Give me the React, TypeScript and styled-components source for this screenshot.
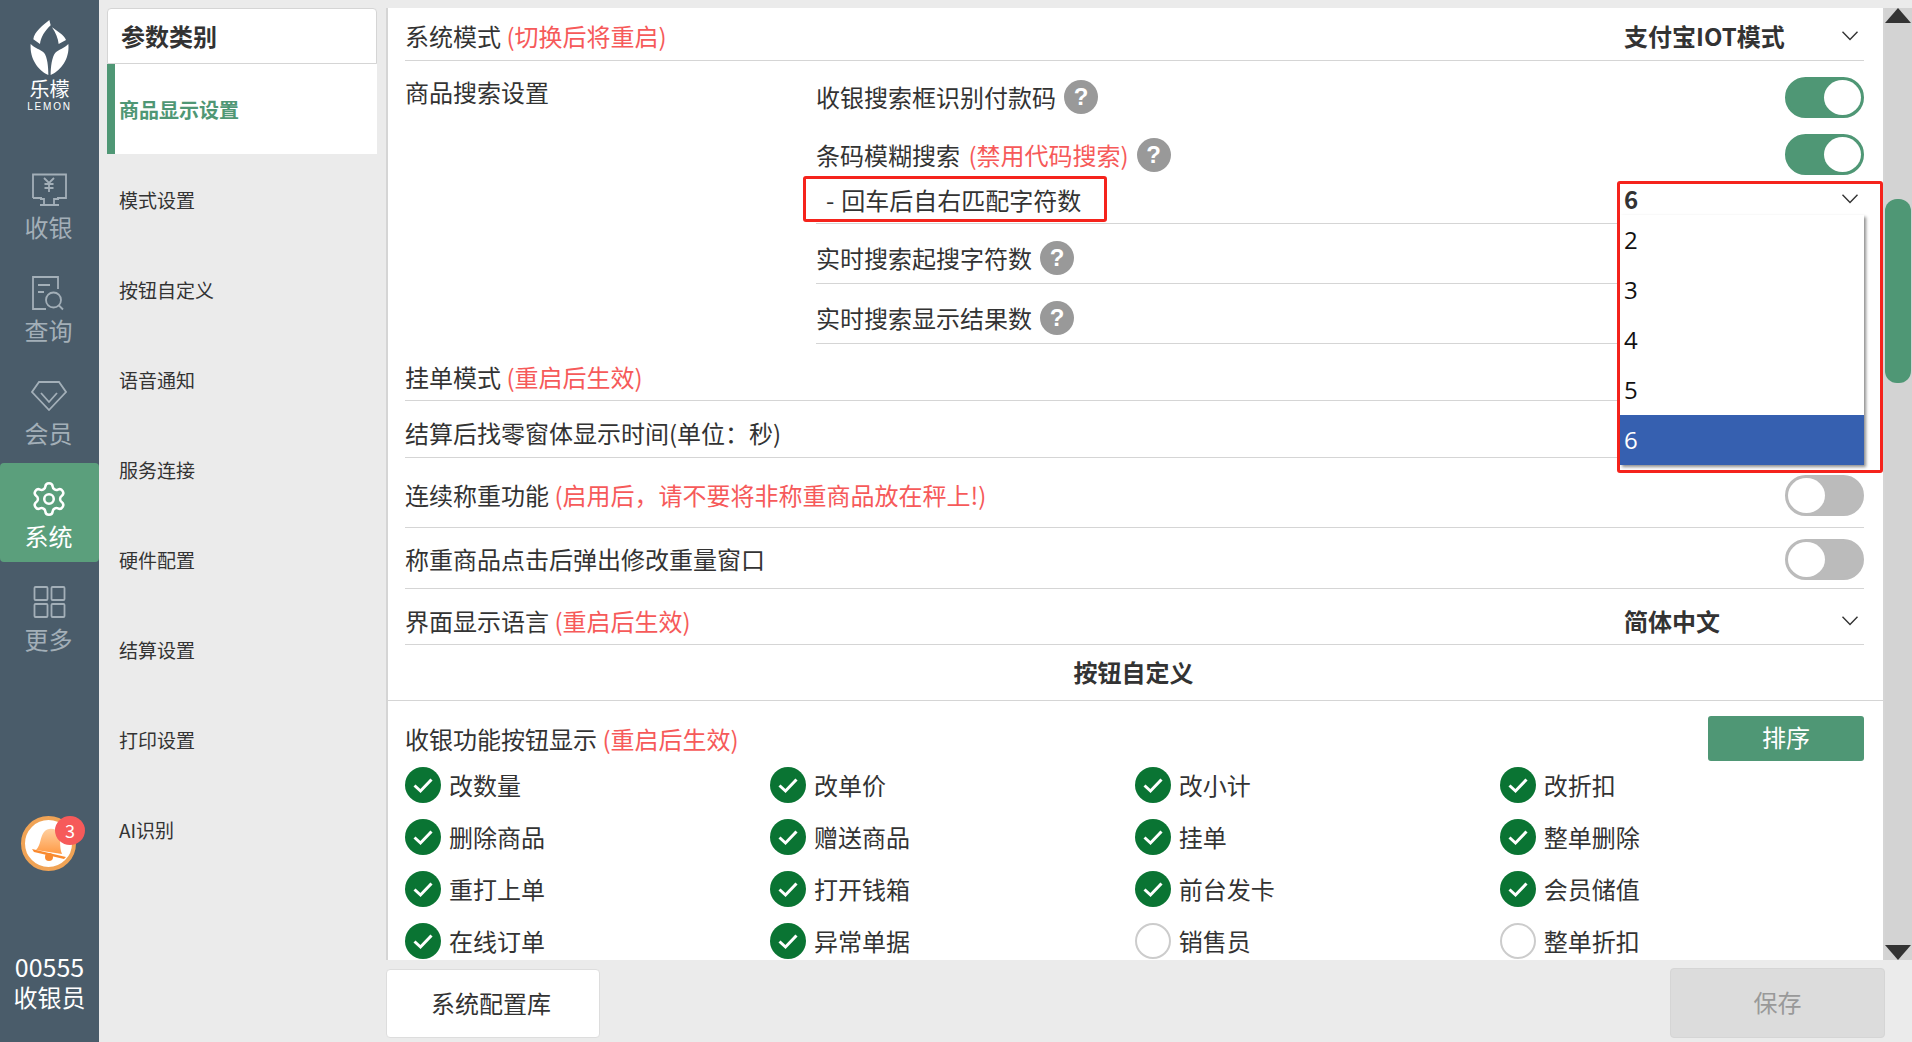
import React from 'react';
import styled, { createGlobalStyle } from 'styled-components';
import { Settings } from 'lucide-react';

const FONT = '"Noto Sans CJK SC", "Noto Sans", sans-serif';

const GlobalStyle = createGlobalStyle`
  html, body {
    margin: 0;
    padding: 0;
    background: #ebebeb;
  }
  * {
    box-sizing: border-box;
  }
`;

const categories = ['模式设置', '按钮自定义', '语音通知', '服务连接', '硬件配置', '结算设置', '打印设置', 'AI识别'];

const buttons: { name: string; on: boolean }[] = [
  { name: '改数量', on: true },
  { name: '改单价', on: true },
  { name: '改小计', on: true },
  { name: '改折扣', on: true },
  { name: '删除商品', on: true },
  { name: '赠送商品', on: true },
  { name: '挂单', on: true },
  { name: '整单删除', on: true },
  { name: '重打上单', on: true },
  { name: '打开钱箱', on: true },
  { name: '前台发卡', on: true },
  { name: '会员储值', on: true },
  { name: '在线订单', on: true },
  { name: '异常单据', on: true },
  { name: '销售员', on: false },
  { name: '整单折扣', on: false },
];

const MonitorIcon = () => (
  <svg width="36" height="36" viewBox="0 0 36 36" fill="none" stroke="currentColor" strokeWidth="1.8">
    <path d="M2 26V2.5h33V26H26M2 26h9" />
    <path d="M9 33h19M13 33v-6h-4M23 33v-6h5" />
    <path d="M13 6l5 5 5-5M18 11v9M13.5 12h9M13.5 16h9" />
  </svg>
);

const QueryIcon = () => (
  <svg width="36" height="36" viewBox="0 0 36 36" fill="none" stroke="currentColor" strokeWidth="1.8">
    <path d="M27 14V2H2v32h13" />
    <path d="M7 10h12M7 17h6" />
    <circle cx="22.5" cy="25" r="7.5" />
    <path d="M28 30.5l4 4" />
  </svg>
);

const MemberIcon = () => (
  <svg width="36" height="36" viewBox="0 0 36 36" fill="none" stroke="currentColor" strokeWidth="1.8">
    <path d="M8 4h20l7 10-17 18L1 14z" />
    <path d="M10 15l8 9 8-9" />
  </svg>
);

const MoreIcon = () => (
  <svg width="36" height="36" viewBox="0 0 36 36" fill="none" stroke="currentColor" strokeWidth="1.8">
    <rect x="3.5" y="3" width="13" height="13" rx="1" />
    <rect x="20.5" y="3" width="13" height="13" rx="1" />
    <rect x="3.5" y="20" width="13" height="13" rx="1" />
    <rect x="20.5" y="20" width="13" height="13" rx="1" />
  </svg>
);

const LogoMark = () => (
  <svg width="39" height="55" viewBox="0 0 117 165" fill="#ffffff">
    <path d="M58 0C40 15 12 35 10 58L30 72C32 52 45 32 62 16Z" />
    <path d="M66 22C80 32 102 45 108 60L86 72C84 55 78 40 66 22Z" />
    <path d="M2 72C15 85 30 88 42 98C52 110 55 140 55 165C30 155 -2 120 2 72Z" />
    <path d="M115 72C102 85 88 88 76 98C66 110 62 140 62 165C88 155 120 120 115 72Z" />
  </svg>
);

const BellIcon = () => (
  <svg width="42" height="42" viewBox="0 0 42 42">
    <defs>
      <linearGradient id="bellFill" x1="0" y1="0" x2="0" y2="1">
        <stop offset="0" stopColor="#ffd0a0" />
        <stop offset="1" stopColor="#ff9a45" />
      </linearGradient>
    </defs>
    <path d="M8 27C13 22 12 14 16 9C20 4 28 5 31 10C33 15 31 24 34 31Z" fill="url(#bellFill)" />
    <path d="M4 26L38 34L36 36L6 29Z" fill="#f98a2f" />
    <circle cx="21" cy="34" r="4" fill="#f98a2f" />
  </svg>
);

const Chevron = () => (
  <svg width="16" height="10" viewBox="0 0 16 10" fill="none" stroke="#333333" strokeWidth="1.4">
    <path d="M0.5 0.8L8 8.5L15.5 0.8" />
  </svg>
);

const CheckOn = () => (
  <svg width="36" height="36" viewBox="0 0 36 36">
    <circle cx="18" cy="18" r="18" fill="#0a7433" />
    <path d="M9.5 18.5L15.5 24L26.5 12.5" fill="none" stroke="#ffffff" strokeWidth="3" />
  </svg>
);

export default function App() {
  return (
    <Page>
      <GlobalStyle />
      <SideBar>
        <Logo>
          <LogoMark />
          <LogoName>乐檬</LogoName>
          <LogoSub>LEMON</LogoSub>
        </Logo>
        <NavList>
          <NavItem>
            <NavIcon><MonitorIcon /></NavIcon>
            <NavLabel>收银</NavLabel>
          </NavItem>
          <NavItem>
            <NavIcon><QueryIcon /></NavIcon>
            <NavLabel>查询</NavLabel>
          </NavItem>
          <NavItem>
            <NavIcon><MemberIcon /></NavIcon>
            <NavLabel>会员</NavLabel>
          </NavItem>
          <NavItem $active>
            <NavIcon><Settings size={38} strokeWidth={1.6} /></NavIcon>
            <NavLabel>系统</NavLabel>
          </NavItem>
          <NavItem>
            <NavIcon><MoreIcon /></NavIcon>
            <NavLabel>更多</NavLabel>
          </NavItem>
        </NavList>
        <Bell>
          <BellIcon />
          <BellBadge>3</BellBadge>
        </Bell>
        <UserInfo>
          <UserCode>00555</UserCode>
          <div>收银员</div>
        </UserInfo>
      </SideBar>

      <Categories>
        <CategoryHeader>参数类别</CategoryHeader>
        <ActiveCategory>商品显示设置</ActiveCategory>
        {categories.map((name) => (
          <CategoryItem key={name}>{name}</CategoryItem>
        ))}
      </Categories>

      <Content>
        <Body>
          <Panel>
            <Settings_>
              <Row $h={53} $pt={4}>
                <span>系统模式 <Warn>(切换后将重启)</Warn></span>
                <Select>
                  <SelectValue>支付宝IOT模式</SelectValue>
                  <Chevron />
                </Select>
              </Row>
              <Group>
                <GroupLabel>商品搜索设置</GroupLabel>
                <SubRows>
                  <SubRow $h={72} $plain>
                    <SubLabel>收银搜索框识别付款码<Help>?</Help></SubLabel>
                    <Toggle $on><Knob /></Toggle>
                  </SubRow>
                  <SubRow $h={43} $plain>
                    <SubLabel>条码模糊搜索&nbsp;<SubWarn>(禁用代码搜索)</SubWarn><Help>?</Help></SubLabel>
                    <Toggle $on><Knob /></Toggle>
                  </SubRow>
                  <SubRow $h={48} $front>
                    <SubLabel $indent>- 回车后自右匹配字符数</SubLabel>
                    <Highlight />
                    <OpenSelect>
                      <OpenHead>
                        <SelectValue>6</SelectValue>
                        <Chevron />
                      </OpenHead>
                      <OptionList>
                        {[2, 3, 4, 5, 6].map((n) => (
                          <Option key={n} $selected={n === 6}>{n}</Option>
                        ))}
                      </OptionList>
                    </OpenSelect>
                  </SubRow>
                  <SubRow $h={60} $pt={9}>
                    <SubLabel>实时搜索起搜字符数<Help>?</Help></SubLabel>
                  </SubRow>
                  <SubRow $h={60} $pt={9}>
                    <SubLabel>实时搜索显示结果数<Help>?</Help></SubLabel>
                  </SubRow>
                </SubRows>
              </Group>
              <Row $h={57} $pt={10}>
                <span>挂单模式 <Warn>(重启后生效)</Warn></span>
              </Row>
              <Row $h={57} $pt={8}>
                <span>结算后找零窗体显示时间(单位：秒)</span>
              </Row>
              <Row $h={70} $pt={5}>
                <span>连续称重功能 <Warn>(启用后，请不要将非称重商品放在秤上!)</Warn></span>
                <Toggle><Knob /></Toggle>
              </Row>
              <Row $h={61} $pt={2}>
                <span>称重商品点击后弹出修改重量窗口</span>
                <Toggle><Knob /></Toggle>
              </Row>
              <Row $h={56} $pt={9}>
                <span>界面显示语言 <Warn>(重启后生效)</Warn></span>
                <Select>
                  <SelectValue>简体中文</SelectValue>
                  <Chevron />
                </Select>
              </Row>
            </Settings_>
            <SectionTitle>按钮自定义</SectionTitle>
            <ButtonSection>
              <ButtonHead>
                <span>收银功能按钮显示 <Warn>(重启后生效)</Warn></span>
                <SortButton type="button">排序</SortButton>
              </ButtonHead>
              <CheckGrid>
                {buttons.map((b) => (
                  <CheckItem key={b.name}>
                    {b.on ? <CheckOn /> : <CheckOff />}
                    <span>{b.name}</span>
                  </CheckItem>
                ))}
              </CheckGrid>
            </ButtonSection>
          </Panel>
          <ScrollBar>
            <ArrowUp />
            <Thumb />
            <ArrowDown />
          </ScrollBar>
        </Body>
        <Footer>
          <ConfigButton type="button">系统配置库</ConfigButton>
          <SaveButton type="button">保存</SaveButton>
        </Footer>
      </Content>
    </Page>
  );
}

const Page = styled.div`
  display: flex;
  width: 1912px;
  height: 1042px;
  overflow: hidden;
  background: #ebebeb;
  color: #333333;
  font-family: ${FONT};
`;

const SideBar = styled.aside`
  display: flex;
  flex-direction: column;
  flex: none;
  width: 99px;
  background: #4a5c6a;
`;

const Logo = styled.div`
  display: flex;
  flex-direction: column;
  align-items: center;
  height: 154px;
  padding-top: 20px;
  color: #ffffff;
`;

const LogoName = styled.div`
  margin-top: 2px;
  font-size: 20px;
  line-height: 24px;
`;

const LogoSub = styled.div`
  margin-top: 1px;
  font-family: 'Liberation Sans', sans-serif;
  font-size: 10px;
  line-height: 10px;
  letter-spacing: 1.8px;
`;

const NavList = styled.nav`
  display: flex;
  flex-direction: column;
  gap: 4px;
`;

const NavItem = styled.div<{ $active?: boolean }>`
  display: flex;
  flex-direction: column;
  align-items: center;
  height: 99px;
  padding: 18px 2px 0 0;
  border-radius: 4px;
  background: ${({ $active }) => ($active ? '#5b9f7c' : 'transparent')};
  color: ${({ $active }) => ($active ? '#ffffff' : '#a3afb8')};
`;

const NavIcon = styled.div`
  display: flex;
  align-items: center;
  justify-content: center;
  width: 38px;
  height: 36px;
  margin-bottom: 7px;
`;

const NavLabel = styled.div`
  font-size: 24px;
  line-height: 24px;
`;

const Bell = styled.div`
  position: relative;
  display: flex;
  align-items: center;
  justify-content: center;
  width: 55px;
  height: 55px;
  margin: 151px 0 0 21px;
  border: 4px solid #f0a355;
  border-radius: 50%;
  background: #ffffff;
`;

const BellBadge = styled.div`
  position: absolute;
  top: -4px;
  right: -13px;
  width: 30px;
  height: 29px;
  border-radius: 50%;
  background: #f65a5a;
  color: #ffffff;
  font-size: 18px;
  line-height: 29px;
  text-align: center;
`;

const UserInfo = styled.div`
  margin-top: auto;
  padding-bottom: 30px;
  color: #ffffff;
  font-size: 24px;
  line-height: 30px;
  text-align: center;
`;

const UserCode = styled.div`
  margin-bottom: 1px;
  font-size: 25px;
  line-height: 30px;
`;

const Categories = styled.div`
  flex: none;
  width: 270px;
  margin: 8px 9px 0 8px;
`;

const CategoryHeader = styled.div`
  height: 56px;
  padding-left: 13px;
  border: 1px solid #d5d5d5;
  border-radius: 4px 4px 0 0;
  background: #ffffff;
  font-size: 24px;
  font-weight: 700;
  line-height: 54px;
`;

const ActiveCategory = styled.div`
  height: 90px;
  padding-left: 4px;
  border-left: 8px solid #4f9775;
  background: #ffffff;
  color: #4f9775;
  font-size: 20px;
  font-weight: 700;
  line-height: 92px;
`;

const CategoryItem = styled.div`
  height: 90px;
  padding-left: 12px;
  font-size: 19px;
  line-height: 91px;
`;

const Content = styled.main`
  display: flex;
  flex-direction: column;
  flex: 1;
  min-width: 0;
  padding-top: 8px;
`;

const Body = styled.div`
  display: flex;
  height: 952px;
`;

const Panel = styled.div`
  flex: 1;
  min-width: 0;
  overflow: hidden;
  border-left: 2px solid #d5d5d5;
  border-right: 2px solid #d5d5d5;
  background: #ffffff;
  font-size: 24px;
`;

const Settings_ = styled.div`
  padding: 0 19px 0 17px;
`;

const Row = styled.div<{ $h: number; $pt: number }>`
  display: flex;
  align-items: center;
  justify-content: space-between;
  height: ${({ $h }) => $h}px;
  padding-top: ${({ $pt }) => $pt}px;
  border-bottom: 1px solid #d5d5d5;
  line-height: 32px;
`;

const Warn = styled.span`
  color: #f65a5a;
`;

const SubWarn = styled(Warn)`
  margin-left: 3px;
`;

const Select = styled.div`
  display: flex;
  align-items: center;
  justify-content: space-between;
  width: 240px;
  padding-right: 6px;
`;

const SelectValue = styled.span`
  font-weight: 700;
`;

const Group = styled.div`
  display: flex;
`;

const GroupLabel = styled.div`
  flex: none;
  width: 411px;
  padding-top: 15px;
  line-height: 32px;
`;

const SubRows = styled.div`
  flex: 1;
  min-width: 0;
`;

const SubRow = styled.div<{ $h: number; $pt?: number; $plain?: boolean; $front?: boolean }>`
  position: relative;
  z-index: ${({ $front }) => ($front ? 2 : 'auto')};
  display: flex;
  align-items: center;
  justify-content: space-between;
  height: ${({ $h }) => $h}px;
  padding-top: ${({ $pt }) => $pt ?? 0}px;
  border-bottom: ${({ $plain }) => ($plain ? 'none' : '1px solid #d5d5d5')};
  line-height: 32px;
`;

const SubLabel = styled.div<{ $indent?: boolean }>`
  display: flex;
  align-items: center;
  padding-left: ${({ $indent }) => ($indent ? '10px' : '0')};
  word-spacing: ${({ $indent }) => ($indent ? '1.5px' : '0')};
  white-space: pre;
`;

const Help = styled.span`
  display: block;
  flex: none;
  width: 34px;
  height: 34px;
  margin-left: 8px;
  border-radius: 50%;
  background: #999999;
  color: #ffffff;
  font-family: 'Liberation Sans', sans-serif;
  font-size: 24px;
  font-weight: 700;
  line-height: 34px;
  text-align: center;
`;

const Toggle = styled.div<{ $on?: boolean }>`
  display: flex;
  justify-content: ${({ $on }) => ($on ? 'flex-end' : 'flex-start')};
  flex: none;
  width: 79px;
  height: 41px;
  border: 3px solid ${({ $on }) => ($on ? '#4f9775' : '#bbbbbb')};
  border-radius: 21px;
  background: ${({ $on }) => ($on ? '#4f9775' : '#bbbbbb')};
`;

const Knob = styled.div`
  width: 37px;
  height: 35px;
  border-radius: 50%;
  background: #ffffff;
`;

const Highlight = styled.div`
  position: absolute;
  top: 0;
  left: -13px;
  width: 304px;
  height: 46px;
  border: 3px solid #f5231c;
  border-radius: 3px;
`;

const OpenSelect = styled.div`
  position: absolute;
  top: 5px;
  right: -19px;
  width: 266px;
  height: 292px;
  border: 3px solid #f5231c;
  border-radius: 3px;
  background: #ffffff;
`;

const OpenHead = styled.div`
  display: flex;
  align-items: center;
  justify-content: space-between;
  height: 29px;
  margin-bottom: 2px;
  padding: 0 22px 0 4px;
`;

const OptionList = styled.div`
  width: 244px;
  box-shadow: 2px 2px 3px rgba(0, 0, 0, 0.45);
`;

const Option = styled.div<{ $selected?: boolean }>`
  height: 50px;
  padding-left: 4px;
  background: ${({ $selected }) => ($selected ? '#3660b0' : '#ffffff')};
  color: ${({ $selected }) => ($selected ? '#ffffff' : '#111111')};
  font-family: 'Open Sans', sans-serif;
  font-size: 24px;
  line-height: 50px;
`;

const SectionTitle = styled.div`
  height: 56px;
  padding: 2px 4px 0 0;
  border-bottom: 1px solid #d5d5d5;
  font-weight: 700;
  line-height: 50px;
  text-align: center;
`;

const ButtonSection = styled.div`
  padding: 15px 19px 0 17px;
`;

const ButtonHead = styled.div`
  display: flex;
  align-items: center;
  justify-content: space-between;
  height: 45px;
`;

const SortButton = styled.button`
  width: 156px;
  height: 45px;
  padding: 0 0 5px;
  border: none;
  border-radius: 3px;
  background: #4f9775;
  color: #ffffff;
  font-family: ${FONT};
  font-size: 24px;
`;

const CheckGrid = styled.div`
  display: grid;
  grid-template-columns: repeat(4, 364.9px);
  grid-auto-rows: 36px;
  row-gap: 16px;
  margin-top: 6px;
`;

const CheckItem = styled.div`
  display: flex;
  align-items: center;
  gap: 8px;
  line-height: 36px;
`;

const CheckOff = styled.div`
  flex: none;
  width: 36px;
  height: 36px;
  border: 2px solid #cccccc;
  border-radius: 50%;
  background: #ffffff;
`;

const ScrollBar = styled.div`
  display: flex;
  flex-direction: column;
  flex: none;
  width: 27px;
  background: #d3d3d3;
`;

const ArrowUp = styled.div`
  width: 0;
  height: 0;
  border-right: 13.5px solid transparent;
  border-bottom: 15px solid #333333;
  border-left: 13.5px solid transparent;
`;

const Thumb = styled.div`
  width: 26px;
  height: 184px;
  margin-top: 176px;
  border-radius: 12px;
  background: #4f9775;
`;

const ArrowDown = styled.div`
  width: 0;
  height: 0;
  margin-top: auto;
  border-top: 15px solid #333333;
  border-right: 13.5px solid transparent;
  border-left: 13.5px solid transparent;
`;

const Footer = styled.footer`
  display: flex;
  align-items: flex-start;
  justify-content: space-between;
  height: 82px;
  padding-right: 27px;
`;

const ConfigButton = styled.button`
  width: 214px;
  height: 69px;
  margin-top: 9px;
  padding: 0 4px 2px 0;
  border: 1px solid #dddddd;
  border-radius: 4px;
  background: #ffffff;
  color: #333333;
  font-family: ${FONT};
  font-size: 24px;
`;

const SaveButton = styled.button`
  width: 215px;
  height: 70px;
  margin-top: 8px;
  padding: 0 0 3px;
  border: 1px solid #d5d5d5;
  border-radius: 4px;
  background: #dcdcdc;
  color: #999999;
  font-family: ${FONT};
  font-size: 24px;
`;
